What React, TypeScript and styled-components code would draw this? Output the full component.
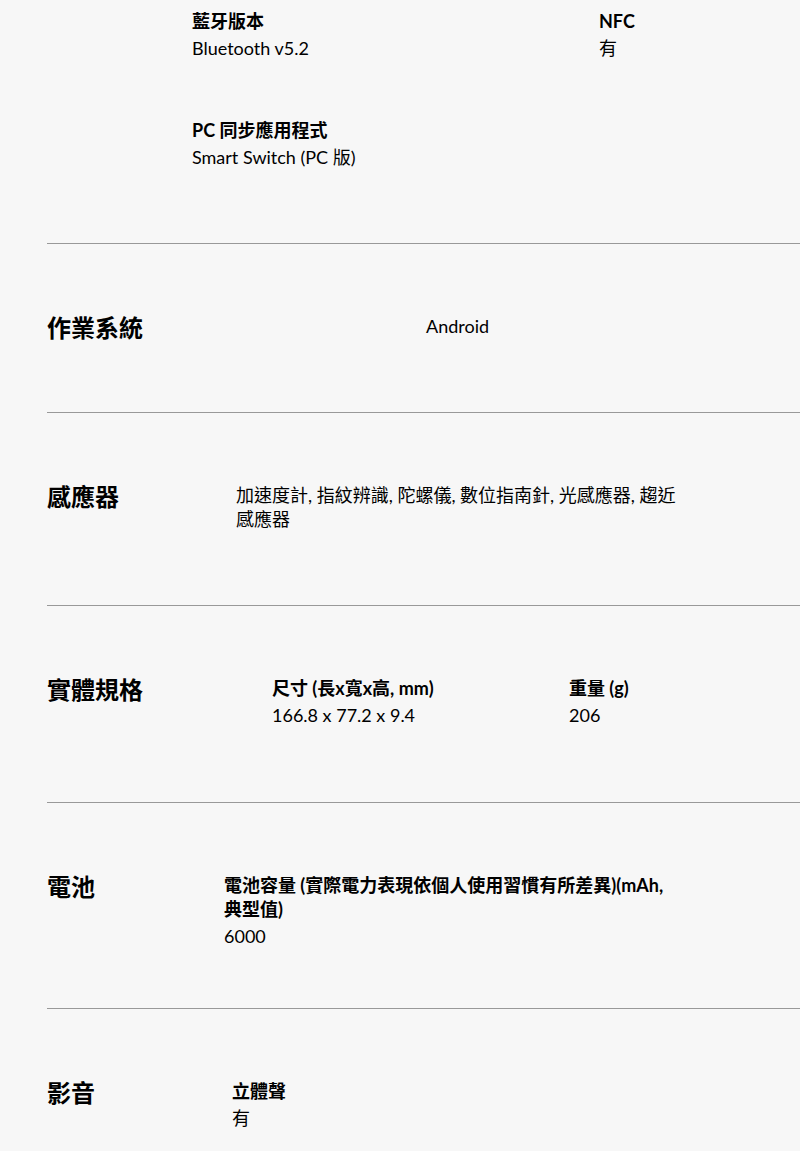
import styled, { createGlobalStyle } from "styled-components";

type Item = { label: string; value: string };

type Section = {
  title?: string;
  offset: number; // where the content column starts, measured from the rule
  colWidth?: number;
  cols?: number;
  padTop?: number;
  padBottom?: number;
  noRule?: boolean;
  items?: Item[];
  text?: string;
};

const sections: Section[] = [
  {
    offset: 145,
    cols: 2,
    colWidth: 407,
    padTop: 9,
    padBottom: 74,
    noRule: true,
    items: [
      { label: "藍牙版本", value: "Bluetooth v5.2" },
      { label: "NFC", value: "有" },
      { label: "PC 同步應用程式", value: "Smart Switch (PC 版)" },
    ],
  },
  { title: "作業系統", offset: 379, padBottom: 74, text: "Android" },
  {
    title: "感應器",
    offset: 189,
    padBottom: 74,
    text: "加速度計, 指紋辨識, 陀螺儀, 數位指南針, 光感應器, 趨近感應器",
  },
  {
    title: "實體規格",
    offset: 225,
    cols: 2,
    colWidth: 297,
    items: [
      { label: "尺寸 (長x寬x高, mm)", value: "166.8 x 77.2 x 9.4" },
      { label: "重量 (g)", value: "206" },
    ],
  },
  {
    title: "電池",
    offset: 177,
    padBottom: 60,
    items: [
      {
        label: "電池容量 (實際電力表現依個人使用習慣有所差異)(mAh, 典型值)",
        value: "6000",
      },
    ],
  },
  {
    title: "影音",
    offset: 185,
    items: [{ label: "立體聲", value: "有" }],
  },
];

export default function App() {
  return (
    <>
      <GlobalStyle />
      <Page>
        {sections.map((s, i) => (
          <Row
            key={i}
            $offset={s.offset}
            $padTop={s.padTop ?? 70}
            $padBottom={s.padBottom ?? 75}
            $noRule={!!s.noRule}
          >
            <Heading>{s.title ?? ""}</Heading>
            {s.text ? (
              <Plain>{s.text}</Plain>
            ) : (
              <Grid $cols={s.cols ?? 1} $colWidth={s.colWidth ?? 440}>
                {s.items?.map((it) => (
                  <Spec key={it.label}>
                    <Label>{it.label}</Label>
                    <Value>{it.value}</Value>
                  </Spec>
                ))}
              </Grid>
            )}
          </Row>
        ))}
      </Page>
    </>
  );
}

/* -------------------- Styled Components -------------------- */

const GlobalStyle = createGlobalStyle`
  html, body {
    margin: 0;
    background: #f7f7f7;
  }
  body {
    font-family: Lato, "Noto Sans CJK TC", sans-serif;
    color: #000;
  }
`;

const Page = styled.div`
  min-height: 1151px;
  background: #f7f7f7;
  padding-left: 47px;
  overflow: hidden;
`;

const Row = styled.section<{
  $offset: number;
  $padTop: number;
  $padBottom: number;
  $noRule: boolean;
}>`
  display: grid;
  grid-template-columns: ${(p) => p.$offset}px 1fr;
  align-items: start;
  padding: ${(p) => p.$padTop}px 0 ${(p) => p.$padBottom}px;
  border-top: ${(p) => (p.$noRule ? "none" : "1px solid #999")};
`;

const Heading = styled.h3`
  margin: 6px 0 0;
  font-size: 24px;
  line-height: 16px;
  font-weight: 700;
  white-space: nowrap;
`;

const Plain = styled.p`
  margin: 0;
  max-width: 440px;
  font-size: 18px;
  line-height: 24px;
`;

const Grid = styled.div<{ $cols: number; $colWidth: number }>`
  display: grid;
  grid-template-columns: repeat(${(p) => p.$cols}, ${(p) => p.$colWidth}px);
  row-gap: 58px;
`;

const Spec = styled.div`
  display: flex;
  flex-direction: column;
  max-width: 440px;
`;

const Label = styled.div`
  font-size: 18px;
  line-height: 24px;
  font-weight: 700;
  margin-bottom: 3px;
`;

const Value = styled.div`
  font-size: 18px;
  line-height: 24px;
`;
